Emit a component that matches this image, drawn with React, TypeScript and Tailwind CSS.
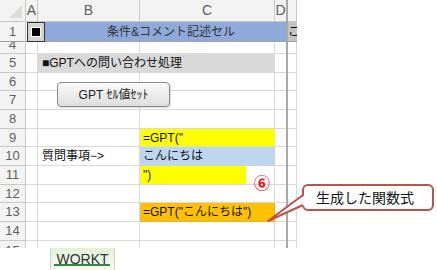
import React from "react";

const FONT = "font-['Liberation_Sans','Noto_Sans_CJK_JP',sans-serif]";
const HDR = "shrink-0 w-[26px] bg-[#f3f3f3] border-r border-b border-[#c8c8c8] flex items-center justify-center text-[13px] text-[#5e5e5e] font-['Liberation_Sans',sans-serif]";
const CA = "shrink-0 w-[12px] border-r border-b border-[#dadada]";
const CB = "shrink-0 w-[102px] border-r border-b border-[#dadada]";
const CC = "shrink-0 w-[135px] border-r border-b border-[#dadada]";
const CD = "shrink-0 w-[11px] border-b border-[#dadada]";
const FZ = "shrink-0 w-[2px] bg-[#a9a9a9]";
const CE = "shrink-0 w-[9px] border-b border-r border-[#dadada]";

function EmptyRow({ label, h }: { label: string; h: string }) {
  return (
    <div className={`flex ${h}`}>
      <div className={HDR}>{label}</div>
      <div className={CA} />
      <div className={CB} />
      <div className={CC} />
      <div className={CD} />
      <div className={FZ} />
      <div className={CE} />
    </div>
  );
}

export default function App() {
  return (
    <div className={`relative w-[437px] h-[270px] bg-white overflow-hidden ${FONT}`}>
      {/* column header */}
      <div className="flex h-[22px]">
        <div className="relative shrink-0 w-[26px] bg-[#f3f3f3] border-r border-b border-[#c8c8c8]">
          <div className="absolute right-[3px] bottom-[3px] w-0 h-0 border-l-[13px] border-l-transparent border-b-[13px] border-b-[#dcdcdc]" />
        </div>
        <div className="shrink-0 w-[12px] bg-[#f3f3f3] border-r border-b border-[#c8c8c8] flex items-center justify-center text-[14px] text-[#5e5e5e] font-['Liberation_Sans',sans-serif]">A</div>
        <div className="shrink-0 w-[102px] bg-[#f3f3f3] border-r border-b border-[#c8c8c8] flex items-center justify-center text-[14px] text-[#5e5e5e] font-['Liberation_Sans',sans-serif]">B</div>
        <div className="shrink-0 w-[135px] bg-[#f3f3f3] border-r border-b border-[#c8c8c8] flex items-center justify-center text-[14px] text-[#5e5e5e] font-['Liberation_Sans',sans-serif]">C</div>
        <div className="shrink-0 w-[11px] bg-[#f3f3f3] border-b border-[#c8c8c8] flex items-center justify-center text-[14px] text-[#5e5e5e] font-['Liberation_Sans',sans-serif]">D</div>
        <div className={FZ} />
        <div className="shrink-0 w-[9px] bg-[#f3f3f3] border-b border-r border-[#c8c8c8]" />
      </div>

      {/* row 1 */}
      <div className="flex h-[20px]">
        <div className={`${HDR} border-b-[#a0a0a0]`}>1</div>
        <div className="shrink-0 w-[12px] border-b border-[#a0a0a0]" />
        <div className="shrink-0 w-[248px] bg-[#8eaadb] border-b border-[#a0a0a0] flex items-center pl-[69px] text-[12px] text-[#333]">
          条件&amp;コメント記述セル
        </div>
        <div className={FZ} />
        <div className="shrink-0 w-[9px] bg-[#c3c3c3] border-b border-[#a0a0a0] overflow-hidden flex items-center text-[12px] text-black whitespace-nowrap">
          こ
        </div>
      </div>

      {/* row 4 (partially hidden) */}
      <div className="flex h-[12px]">
        <div className="shrink-0 w-[26px] bg-[#f3f3f3] border-r border-b border-[#c8c8c8] overflow-hidden">
          <div className="h-[19px] -mt-[7px] flex items-center justify-center text-[13px] text-[#5e5e5e] font-['Liberation_Sans',sans-serif]">4</div>
        </div>
        <div className={CA} />
        <div className={CB} />
        <div className={CC} />
        <div className={CD} />
        <div className={FZ} />
        <div className={CE} />
      </div>

      {/* row 5 */}
      <div className="flex h-[19px]">
        <div className={HDR}>5</div>
        <div className={CA} />
        <div className="shrink-0 w-[237px] bg-[#d9d9d9] border-r border-b border-[#dadada] flex items-center pl-[4px] text-[12px] text-[#111]">
          ■GPTへの問い合わせ処理
        </div>
        <div className={CD} />
        <div className={FZ} />
        <div className={CE} />
      </div>

      <EmptyRow label="6" h="h-[18px]" />
      <EmptyRow label="7" h="h-[19px]" />
      <EmptyRow label="8" h="h-[19px]" />

      {/* row 9 */}
      <div className="flex h-[18px]">
        <div className={HDR}>9</div>
        <div className={CA} />
        <div className={CB} />
        <div className="shrink-0 w-[135px] bg-[#ffff00] border-r border-b border-[#e5e5a0] flex items-center pl-[3px] text-[12px] text-[#111]">
          =GPT("
        </div>
        <div className={CD} />
        <div className={FZ} />
        <div className={CE} />
      </div>

      {/* row 10 */}
      <div className="flex h-[19px]">
        <div className={HDR}>10</div>
        <div className={CA} />
        <div className={`${CB} flex items-center pl-[4px] text-[12px] text-[#111]`}>質問事項−&gt;</div>
        <div className="shrink-0 w-[135px] bg-[#bdd7ee] border-r border-b border-[#c8d4e0] flex items-center pl-[3px] text-[12px] text-[#111]">
          こんにちは
        </div>
        <div className={CD} />
        <div className={FZ} />
        <div className={CE} />
      </div>

      {/* row 11 */}
      <div className="flex h-[19px]">
        <div className={HDR}>11</div>
        <div className={CA} />
        <div className={CB} />
        <div className={`${CC} flex`}>
          <div className="w-[106px] h-full bg-[#ffff00] flex items-center pl-[3px] text-[12px] text-[#111]">")</div>
        </div>
        <div className={CD} />
        <div className={FZ} />
        <div className={CE} />
      </div>

      <EmptyRow label="12" h="h-[18px]" />

      {/* row 13 */}
      <div className="flex h-[19px]">
        <div className={HDR}>13</div>
        <div className={CA} />
        <div className={CB} />
        <div className="shrink-0 w-[135px] bg-[#ffc000] border-r border-b border-[#e0b040] flex items-center pl-[3px] text-[12px] text-[#111]">
          =GPT("こんにちは")
        </div>
        <div className={CD} />
        <div className={FZ} />
        <div className={CE} />
      </div>

      <EmptyRow label="14" h="h-[19px]" />

      {/* row 15 partial */}
      <div className="flex h-[7px] overflow-hidden">
        <div className="shrink-0 w-[26px] bg-[#f3f3f3] border-r border-[#c8c8c8] overflow-hidden">
          <div className="h-[19px] flex items-center justify-center text-[13px] text-[#5e5e5e] font-['Liberation_Sans',sans-serif]">15</div>
        </div>
        <div className="shrink-0 w-[12px] border-r border-[#dadada]" />
        <div className="shrink-0 w-[102px] border-r border-[#dadada]" />
        <div className="shrink-0 w-[135px] border-r border-[#dadada]" />
        <div className="shrink-0 w-[11px]" />
        <div className={FZ} />
        <div className="shrink-0 w-[9px] border-r border-[#dadada]" />
      </div>

      {/* sheet tab bar */}
      <div className="flex h-[22px] pl-[50px]">
        <div className="relative w-[65px] h-full border-x border-[#d0d0d0] bg-gradient-to-b from-[#e3f1da] to-[#f6fbf3] flex justify-center pt-[1px] text-[14px] text-[#333] font-['Liberation_Sans',sans-serif]">
          WORKT
          <div className="absolute left-[3px] right-[4px] bottom-[4px] h-[2px] bg-[#2e8b3e]" />
        </div>
      </div>

      {/* A1 square button */}
      <div className="absolute left-[27px] top-[22px] w-[18px] h-[20px] border border-[#333] bg-[#d4d4d4] flex items-center">
        <div className="ml-[4px] w-[8px] h-[8px] bg-black outline outline-1 outline-white" />
      </div>

      {/* GPT button */}
      <div className="absolute left-[57px] top-[82px] w-[113px] h-[25px] rounded-[4px] border border-[#8a8a8a] bg-gradient-to-b from-[#fbfbfb] to-[#dedede] shadow-[1px_1px_1px_rgba(0,0,0,0.15)] flex items-center justify-center text-[12px] text-[#222]">
        GPT ｾﾙ値ｾｯﾄ
      </div>

      {/* circled 6 */}
      <div className="absolute left-[254px] top-[173px] text-[16px] leading-[18px] font-bold text-[#ff0000] font-['Noto_Sans_CJK_JP',sans-serif]">
        ⑥
      </div>

      {/* callout */}
      <div className="absolute left-[302px] top-[184px] w-[132px] h-[27px] rounded-[6px] border-2 border-[#c0504d] bg-white flex items-center pl-[12px] text-[14px] text-[#111] font-['Noto_Sans_CJK_JP',sans-serif]">
        生成した関数式
      </div>
      <svg className="absolute left-0 top-0 pointer-events-none" width="437" height="270">
        <polygon points="305,195 268,221 305,205" fill="#ffffff" />
        <polyline points="303,195 268,221 303,205" fill="none" stroke="#c0504d" strokeWidth="2" strokeLinejoin="round" />
      </svg>
    </div>
  );
}
